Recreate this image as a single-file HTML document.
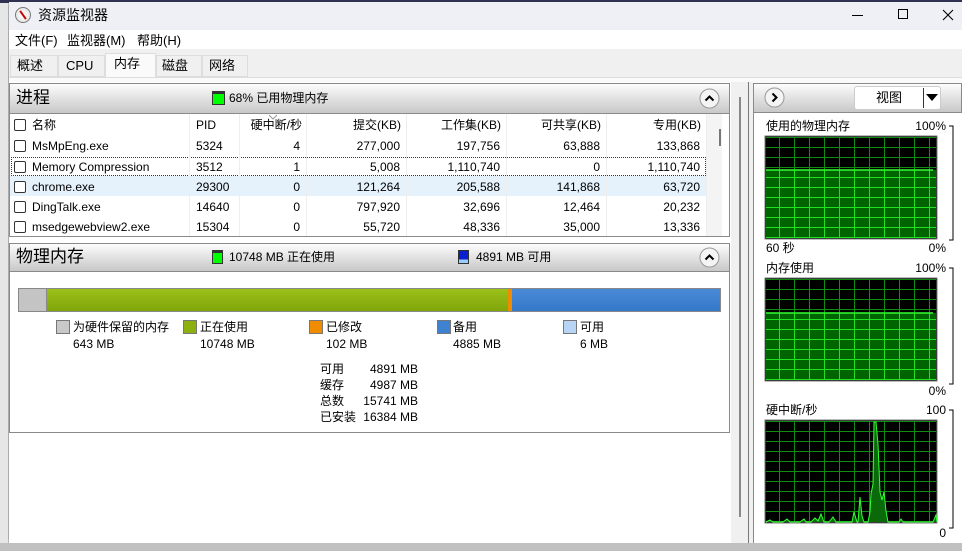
<!DOCTYPE html>
<html><head><meta charset="utf-8"><style>
*{margin:0;padding:0;box-sizing:border-box}
body{width:962px;height:551px;overflow:hidden;background:#b8b8b8;font-family:"Liberation Sans","Noto Sans CJK SC",sans-serif;font-size:12px;line-height:15px;color:#000;position:relative;white-space:nowrap}
.a{position:absolute}
.hdr{background:linear-gradient(#fdfdfd,#e4e4e4 45%,#c8c8c8);border:1px solid #8a8a8a}
.cb{width:12px;height:12px;border:1px solid #333;border-radius:2px;background:#fff}
.r{text-align:right}
.sq{width:14px;height:14px;border:1px solid #777}
.tab{border:1px solid #ddd;background:#f0f0f0;font-size:13px;line-height:20px;height:22px}
</style></head><body>
<div class="a" style="left:0;top:0;width:962px;height:3px;background:#303050"></div>
<div class="a" style="left:0;top:3px;width:8px;height:548px;background:#e6e6e6"></div>
<div class="a" style="left:8px;top:2px;width:954px;height:541px;background:#fff;border-radius:6px 0 0 6px;border-left:1px solid #aaa"></div>
<div class="a" style="left:9px;top:2px;width:953px;height:28px;background:#eff0f6"></div>
<div class="a" style="left:15px;top:7px;width:16px;height:16px;border-radius:50%;border:1px solid #777;background:radial-gradient(#fff,#ddd)"></div>
<div class="a" style="left:18px;top:14px;width:10px;height:2px;background:#c00;transform:rotate(55deg)"></div>
<div class="a" style="left:38px;top:7px;font-size:14px;line-height:17px">资源监视器</div>
<div class="a" style="left:852px;top:15px;width:11px;height:1px;background:#000"></div>
<div class="a" style="left:898px;top:9px;width:10px;height:10px;border:1px solid #000"></div>
<svg class="a" style="left:942px;top:9px" width="12" height="12"><path d="M1 1L11 11M11 1L1 11" stroke="#000" stroke-width="1.1"/></svg>
<div class="a" style="left:15px;top:33px;font-size:13px">文件(F)</div>
<div class="a" style="left:67px;top:33px;font-size:13px">监视器(M)</div>
<div class="a" style="left:137px;top:33px;font-size:13px">帮助(H)</div>
<div class="a" style="left:9px;top:49px;width:953px;height:494px;background:#f0f0f0"></div>
<div class="a tab" style="left:10px;top:55px;width:48px;padding-left:6px">概述</div>
<div class="a tab" style="left:58px;top:55px;width:47px;padding-left:7px">CPU</div>
<div class="a tab" style="left:105px;top:53px;width:51px;height:24px;border-bottom:none;background:#fafafa;padding-left:8px">内存</div>
<div class="a tab" style="left:156px;top:55px;width:46px;padding-left:5px">磁盘</div>
<div class="a tab" style="left:202px;top:55px;width:46px;padding-left:6px">网络</div>
<div class="a" style="left:9px;top:77px;width:953px;height:1px;background:#ddd"></div>
<div class="a" style="left:9px;top:78px;width:953px;height:465px;background:#fafafa"></div>
<div class="a" style="left:9px;top:82px;width:722px;height:461px;background:#fff"></div>
<div class="a hdr" style="left:9px;top:83px;width:721px;height:31px"></div>
<div class="a" style="left:16px;top:88px;font-size:17px;line-height:20px">进程</div>
<div class="a" style="left:212px;top:91px;width:13px;height:14px;background:#0f0;border:1px solid #333;border-top:3px solid #333"></div>
<div class="a" style="left:229px;top:91px">68% 已用物理内存</div>
<svg class="a" style="left:699px;top:88px" width="21" height="21"><circle cx="10.5" cy="10.5" r="9.5" fill="#f4f4f4" stroke="#999"/><path d="M6.5 12.5L10.5 8.5L14.5 12.5" stroke="#000" stroke-width="2" fill="none"/></svg>
<div class="a" style="left:9px;top:114px;width:721px;height:123px;border:1px solid #8a8a8a;border-top:none;background:#fff"></div>
<div class="a" style="left:707px;top:114px;width:15px;height:122px;background:#f4f4f4"></div>
<div class="a" style="left:719px;top:129px;width:2px;height:17px;background:#777"></div>
<div class="a" style="left:10px;top:176px;width:697px;height:20px;background:#e5f1fb"></div>
<div class="a" style="left:11px;top:157px;width:695px;height:19px;border:1px dotted #333"></div>
<svg class="a" style="left:268px;top:114px" width="10" height="6"><path d="M1 1L5 5L9 1" stroke="#999" fill="none"/></svg>
<div class="a" style="left:189px;top:114px;width:1px;height:122px;background:#eee"></div>
<div class="a" style="left:239px;top:114px;width:1px;height:122px;background:#eee"></div>
<div class="a" style="left:306px;top:114px;width:1px;height:122px;background:#eee"></div>
<div class="a" style="left:406px;top:114px;width:1px;height:122px;background:#eee"></div>
<div class="a" style="left:506px;top:114px;width:1px;height:122px;background:#eee"></div>
<div class="a" style="left:606px;top:114px;width:1px;height:122px;background:#eee"></div>
<div class="a" style="left:706px;top:114px;width:1px;height:122px;background:#eee"></div>
<div class="a" style="left:0;top:118px;width:730px;height:16px">
<div class="a cb" style="left:14px;top:1px"></div><div class="a" style="left:32px">名称</div><div class="a" style="left:196px">PID</div><div class="a r" style="left:240px;width:62px">硬中断/秒</div><div class="a r" style="left:310px;width:91px">提交(KB)</div><div class="a r" style="left:410px;width:91px">工作集(KB)</div><div class="a r" style="left:510px;width:91px">可共享(KB)</div><div class="a r" style="left:610px;width:91px">专用(KB)</div>
</div>
<div class="a" style="left:0;top:139px;width:730px;height:16px">
<div class="a cb" style="left:14px;top:1px"></div><div class="a" style="left:32px">MsMpEng.exe</div><div class="a" style="left:196px">5324</div><div class="a r" style="left:240px;width:60px">4</div><div class="a r" style="left:310px;width:90px">277,000</div><div class="a r" style="left:410px;width:90px">197,756</div><div class="a r" style="left:510px;width:90px">63,888</div><div class="a r" style="left:610px;width:90px">133,868</div>
</div>
<div class="a" style="left:0;top:160px;width:730px;height:16px">
<div class="a cb" style="left:14px;top:1px"></div><div class="a" style="left:32px">Memory Compression</div><div class="a" style="left:196px">3512</div><div class="a r" style="left:240px;width:60px">1</div><div class="a r" style="left:310px;width:90px">5,008</div><div class="a r" style="left:410px;width:90px">1,110,740</div><div class="a r" style="left:510px;width:90px">0</div><div class="a r" style="left:610px;width:90px">1,110,740</div>
</div>
<div class="a" style="left:0;top:180px;width:730px;height:16px">
<div class="a cb" style="left:14px;top:1px"></div><div class="a" style="left:32px">chrome.exe</div><div class="a" style="left:196px">29300</div><div class="a r" style="left:240px;width:60px">0</div><div class="a r" style="left:310px;width:90px">121,264</div><div class="a r" style="left:410px;width:90px">205,588</div><div class="a r" style="left:510px;width:90px">141,868</div><div class="a r" style="left:610px;width:90px">63,720</div>
</div>
<div class="a" style="left:0;top:200px;width:730px;height:16px">
<div class="a cb" style="left:14px;top:1px"></div><div class="a" style="left:32px">DingTalk.exe</div><div class="a" style="left:196px">14640</div><div class="a r" style="left:240px;width:60px">0</div><div class="a r" style="left:310px;width:90px">797,920</div><div class="a r" style="left:410px;width:90px">32,696</div><div class="a r" style="left:510px;width:90px">12,464</div><div class="a r" style="left:610px;width:90px">20,232</div>
</div>
<div class="a" style="left:0;top:220px;width:730px;height:16px">
<div class="a cb" style="left:14px;top:1px"></div><div class="a" style="left:32px">msedgewebview2.exe</div><div class="a" style="left:196px">15304</div><div class="a r" style="left:240px;width:60px">0</div><div class="a r" style="left:310px;width:90px">55,720</div><div class="a r" style="left:410px;width:90px">48,336</div><div class="a r" style="left:510px;width:90px">35,000</div><div class="a r" style="left:610px;width:90px">13,336</div>
</div>
<div class="a hdr" style="left:9px;top:243px;width:721px;height:29px"></div>
<div class="a" style="left:16px;top:247px;font-size:17px;line-height:20px">物理内存</div>
<div class="a" style="left:212px;top:250px;width:11px;height:14px;background:#0f0;border:1px solid #333;border-top:3px solid #333"></div>
<div class="a" style="left:229px;top:250px">10748 MB 正在使用</div>
<div class="a" style="left:458px;top:250px;width:11px;height:14px;background:linear-gradient(#0a1fd0 70%,#9cf 70%);border:1px solid #333"></div>
<div class="a" style="left:476px;top:250px">4891 MB 可用</div>
<svg class="a" style="left:699px;top:247px" width="21" height="21"><circle cx="10.5" cy="10.5" r="9.5" fill="#f4f4f4" stroke="#999"/><path d="M6.5 12.5L10.5 8.5L14.5 12.5" stroke="#000" stroke-width="2" fill="none"/></svg>
<div class="a" style="left:9px;top:272px;width:721px;height:161px;border:1px solid #8a8a8a;border-top:none;background:#fff"></div>
<div class="a" style="left:18px;top:288px;width:703px;height:24px;border:1px solid #888;display:flex">
<div style="width:28px;background:#c4c4c4;border-right:1px solid #888"></div>
<div style="width:461px;background:linear-gradient(#9cc11a,#7fa50a)"></div>
<div style="width:4px;background:#f08c00"></div>
<div style="flex:1;background:linear-gradient(#4a8ad8,#3578c8)"></div>
</div>
<div class="a sq" style="left:56px;top:320px;background:#c8c8c8"></div><div class="a" style="left:73px;top:320px">为硬件保留的内存</div><div class="a" style="left:73px;top:337px">643 MB</div>
<div class="a sq" style="left:183px;top:320px;background:#8bb010"></div><div class="a" style="left:200px;top:320px">正在使用</div><div class="a" style="left:200px;top:337px">10748 MB</div>
<div class="a sq" style="left:309px;top:320px;background:#f08c00"></div><div class="a" style="left:326px;top:320px">已修改</div><div class="a" style="left:326px;top:337px">102 MB</div>
<div class="a sq" style="left:437px;top:320px;background:#3f82d2"></div><div class="a" style="left:453px;top:320px">备用</div><div class="a" style="left:453px;top:337px">4885 MB</div>
<div class="a sq" style="left:563px;top:320px;background:#b8d4f4"></div><div class="a" style="left:580px;top:320px">可用</div><div class="a" style="left:580px;top:337px">6 MB</div>
<div class="a" style="left:320px;top:361px;line-height:16px">可用<br>缓存<br>总数<br>已安装</div>
<div class="a r" style="left:360px;width:58px;top:361px;line-height:16px">4891 MB<br>4987 MB<br>15741 MB<br>16384 MB</div>
<div class="a" style="left:731px;top:82px;width:22px;height:461px;background:#f0f0f0"></div>
<div class="a" style="left:739px;top:97px;width:2px;height:420px;background:#888"></div>
<div class="a" style="left:748px;top:82px;width:1px;height:461px;background:#777"></div>
<div class="a" style="left:753px;top:83px;width:209px;height:460px;background:#fff;border-left:1px solid #8a8a8a"></div>
<div class="a hdr" style="left:753px;top:83px;width:209px;height:30px"></div>
<svg class="a" style="left:764px;top:87px" width="21" height="21"><circle cx="10.5" cy="10.5" r="9.5" fill="#f4f4f4" stroke="#999"/><path d="M8.5 6.5L12.5 10.5L8.5 14.5" stroke="#000" stroke-width="2" fill="none"/></svg>
<div class="a" style="left:854px;top:86px;width:87px;height:24px;border:1px solid #ccc;border-radius:3px;background:#fff"></div>
<div class="a" style="left:876px;top:90px;font-size:13px">视图</div>
<div class="a" style="left:923px;top:88px;width:1px;height:20px;background:#333"></div>
<svg class="a" style="left:926px;top:94px" width="12" height="8"><path d="M0 0H12L6 7Z" fill="#000"/></svg>
<svg class="a" style="left:753px;top:114px" width="209" height="429">
<defs>
<pattern id="g" x="11" y="23" width="15" height="10" patternUnits="userSpaceOnUse"><rect x="0" y="0" width="1" height="10" fill="#22e022"/><rect x="0" y="0" width="15" height="1" fill="#22e022"/></pattern>
<pattern id="g2" x="11" y="23" width="15" height="10" patternUnits="userSpaceOnUse"><rect x="0" y="0" width="1" height="10" fill="#108c10"/><rect x="0" y="0" width="15" height="1" fill="#108c10"/></pattern>
<pattern id="g3" x="11" y="165" width="15" height="10" patternUnits="userSpaceOnUse"><rect x="0" y="0" width="1" height="10" fill="#22e022"/><rect x="0" y="0" width="15" height="1" fill="#22e022"/></pattern>
<pattern id="g4" x="11" y="165" width="15" height="10" patternUnits="userSpaceOnUse"><rect x="0" y="0" width="1" height="10" fill="#108c10"/><rect x="0" y="0" width="15" height="1" fill="#108c10"/></pattern>
<pattern id="g5" x="11" y="307" width="15" height="10" patternUnits="userSpaceOnUse"><rect x="0" y="0" width="1" height="10" fill="#108c10"/><rect x="0" y="0" width="15" height="1" fill="#108c10"/></pattern>
</defs>
<g font-size="12" font-family="Liberation Sans,Noto Sans CJK SC,sans-serif">
<text x="13" y="16">使用的物理内存</text><text x="193" y="16" text-anchor="end">100%</text>
<text x="13" y="138">60 秒</text><text x="193" y="138" text-anchor="end">0%</text>
<text x="13" y="158">内存使用</text><text x="193" y="158" text-anchor="end">100%</text>
<text x="193" y="281" text-anchor="end">0%</text>
<text x="13" y="300">硬中断/秒</text><text x="193" y="300" text-anchor="end">100</text>
<text x="193" y="423" text-anchor="end">0</text>
</g>
<path d="M196 12H200V126H196M196 154H200V270H196M196 296H200V414H196" stroke="#000" fill="none"/>
<rect x="12" y="22" width="172" height="103" fill="#000" stroke="#777"/>
<rect x="13" y="23" width="170" height="101" fill="url(#g2)"/>
<rect x="13" y="56" width="170" height="68" fill="#006400"/>
<rect x="13" y="56" width="170" height="68" fill="url(#g)"/>
<path d="M13 56H180" stroke="#3f3" stroke-width="1.5"/>
<rect x="12" y="164" width="172" height="103" fill="#000" stroke="#777"/>
<rect x="13" y="165" width="170" height="101" fill="url(#g4)"/>
<rect x="13" y="199" width="170" height="67" fill="#006400"/>
<rect x="13" y="199" width="170" height="67" fill="url(#g3)"/>
<path d="M13 199H180" stroke="#3f3" stroke-width="1.5"/>
<rect x="12" y="306" width="172" height="103" fill="#000" stroke="#777"/>
<rect x="13" y="307" width="170" height="101" fill="url(#g5)"/>
<path d="M13 408L17 406L20 408H30L34 405L37 408H47L51 405L53 408L58 408L62 404L65 407L68 400L71 408H76L80 403L83 408H99L101 398L104 408H105L107 383L109 402L111 408H115L117 398L118 380L120 370L121 308L123 308L125 330L127 378L129 386L131 378L133 397L135 408H146L148 405L150 408H180L183 401L184 408" stroke="#3f3" fill="#0a6a0a"/>
</svg>
<div class="a" style="left:0;top:543px;width:962px;height:8px;background:#c0c0c0"></div>
</body></html>
